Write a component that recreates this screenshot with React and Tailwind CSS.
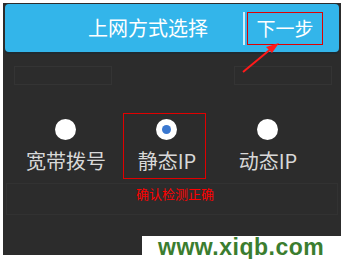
import React from "react";

const CJK = { fontFamily: '"Noto Sans CJK SC", "Noto Sans", sans-serif' };

function Radio({ checked }) {
    return (
        <div className="w-[21px] h-[21px] rounded-full bg-white flex items-center justify-center">
            {checked && <div className="w-[9px] h-[9px] rounded-full bg-[#3a78d0]" />}
        </div>
    );
}

function Option({ label, checked, boxed }) {
    return (
        <div className={`w-[83px] h-[66px] flex flex-col items-center ${boxed ? "border border-[#e00000]" : "border border-transparent"}`}>
            <div className="mt-[5px] ml-[4px]">
                <Radio checked={checked} />
            </div>
            <div className="mt-[9px] ml-[5px] text-[20px] leading-[24px] text-[#d8d8d8] whitespace-nowrap" style={CJK}>
                {label}
            </div>
        </div>
    );
}

export default function App() {
    return (
        <div className="w-[344px] h-[259px] bg-white relative overflow-hidden" style={CJK}>
            <div className="ml-[3px] mt-[3px] w-[338px] h-[252px] bg-[#2c2c2c] pt-px px-[2px]">
                {/* Header */}
                <div className="h-[48px] rounded-[4px] bg-[#33b5ea] shadow-[0_2px_0_#1f2a30] flex items-center">
                    <div className="ml-[83px] w-[122px] text-[20px] leading-[24px] text-white whitespace-nowrap">
                        上网方式选择
                    </div>
                    <div className="ml-[33px] w-[2px] h-[33px] bg-[#cfeefa]" />
                    <div className="ml-[2px] w-[76px] h-[33px] border border-[#e00000] flex items-center justify-center">
                        <span className="text-[19px] leading-[24px] text-white">下一步</span>
                    </div>
                </div>

                {/* faint placeholders */}
                <div className="mt-[14px] flex">
                    <div className="ml-[9px] w-[98px] h-[19px] border border-[#343434]" />
                    <div className="ml-[122px] w-[98px] h-[19px] border border-[#343434]" />
                </div>

                {/* Options */}
                <div className="mt-[28px] flex gap-[18px] pl-[17px]">
                    <Option label="宽带拨号" />
                    <Option label="静态IP" checked boxed />
                    <Option label="动态IP" />
                </div>

                {/* Hint area */}
                <div className="mt-[4px] mx-[1px] h-[32px] border border-[#323232] flex justify-center">
                    <span className="ml-[6px] mt-[2px] text-[13px] leading-[16px] text-[#ff0000]">确认检测正确</span>
                </div>
            </div>

            {/* Arrow annotation */}
            <svg className="absolute left-0 top-0" width="344" height="259" viewBox="0 0 344 259">
                <line x1="243" y1="72" x2="272" y2="48" stroke="#ff1a1a" strokeWidth="2" />
                <polygon points="279,43 266,47 272,53" fill="#ff1a1a" />
            </svg>

            {/* Watermark */}
            <div className="absolute left-[142px] top-[236px] w-[202px] h-[23px] bg-white flex items-center">
                <span
                    className="ml-[16px] text-[23px] leading-[23px] font-bold text-[#3b7d2f] tracking-[0.5px]"
                    style={{ fontFamily: '"Liberation Sans", Arial, sans-serif' }}
                >
                    www.xiqb.com
                </span>
            </div>
        </div>
    );
}
